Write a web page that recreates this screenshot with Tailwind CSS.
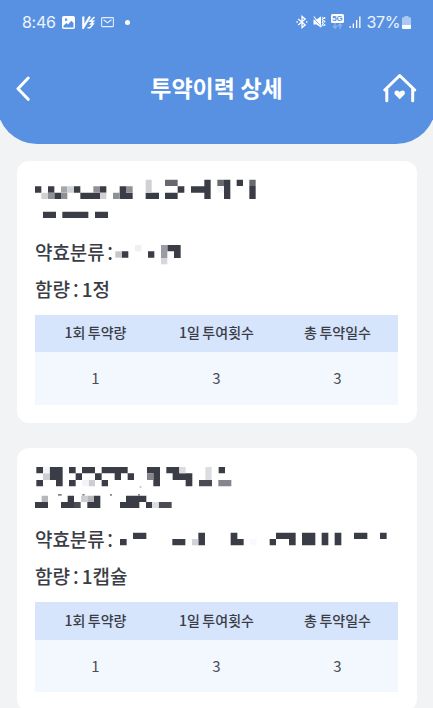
<!DOCTYPE html>
<html lang="ko">
<head>
<meta charset="utf-8">
<title>투약이력 상세</title>
<script src="https://cdn.jsdelivr.net/npm/@tailwindcss/browser@4"></script>
</head>
<body class="h-[708px] overflow-hidden bg-[#f1f3f5] font-['Noto_Sans_CJK_KR',sans-serif] text-[#3b3d46]">
<header class="-mx-[3px] h-[143.5px] rounded-b-[40px] bg-[#5891e2] px-[3px] text-white">
  <div class="flex h-[44px] items-center pl-[22px] pr-[22px] font-[Inter,sans-serif] text-[16px] leading-none text-white/90">
    <span class="w-[40px] tracking-[-0.3px]">8:46</span>
    <svg class="h-[13px] w-[13px]" viewBox="0 0 13 13"><path fill="#fff" fill-rule="evenodd" d="M1.8 0h9.4Q13 0 13 1.8v9.4q0 1.8-1.8 1.8H1.8Q0 13 0 11.200V1.800Q0 0 1.800 0zM1.500 9.800v1.700h10V7L9.300 4.800 6 8.500 4.300 7zM3 2.600v2.200h2.200V2.600z"/></svg>
    <svg class="ml-[7px] h-[13px] w-[13px]" viewBox="0 0 13 13" fill="none" stroke="#fff"><path stroke-width="2.200" d="M1.300 .5v11L8 .5"/><path stroke-width="1.500" d="M12.500 1L8 5.300h3.500L8.800 8h2.400L8 11.800H5.500"/></svg>
    <svg class="ml-[6px] h-[12px] w-[13px]" viewBox="0 0 13 12" fill="none" stroke="#e3edfb" stroke-width="1.100"><rect x=".6" y="1.600" width="11.800" height="9" rx=".8"/><path d="M2.500 3.700l4 3 4-3"/></svg>
    <i class="ml-[11px] h-[5px] w-[5px] rounded-full bg-white"></i>
    <div class="ml-auto flex items-center">
      <svg class="h-[14px] w-[12px]" viewBox="0 0 12 14" fill="none" stroke="#fff" stroke-width="1.300"><path d="M2.200 4l7 6L6 12.600V1.400L9.200 4l-7 6"/><path d="M.4 7h1.400M10 7h1.400"/></svg>
      <svg class="ml-[5px] h-[14px] w-[13px]" viewBox="0 0 13 14"><path fill="#fff" d="M.5 4.500h3.200L8 1.200v11.500L3.700 9.500H.5z"/><path fill="none" stroke="#5891e2" stroke-width="1" d="M0 2.500l9 9.500"/><path fill="none" stroke="#fff" stroke-width="1.100" d="M.8 1.500l8 10M9.400 2l1 1.200-1 1.300 1 1.300-1 1.300 1 1.300-1 1.300 1 1.300M11.700 2v2m0 1.500v2m0 1.500v2"/></svg>
      <div class="ml-[5px] flex h-[17px] w-[13px] flex-col items-center">
        <b class="h-[9px] w-[13px] rounded-[1.500px] bg-white text-center font-['Liberation_Sans',sans-serif] text-[8px] leading-[9px] text-[#5891e2]">5G</b>
        <svg class="h-[6px] w-[11px]" viewBox="0 0 11 6" fill="none" stroke="#8db5ed" stroke-width="1.300"><path d="M3 0v5M1 3l2 2 2-2M8 6V1M6 3l2-2 2 2"/></svg>
      </div>
      <svg class="ml-[5px] h-[13px] w-[12px]" viewBox="0 0 12 13" fill="#fff"><path d="M.5 10h1.200v2H.5zM3.700 7.500h1.300V12H3.700zM7 4h1.300v8H7zM10.200.5h1.300V12h-1.300z"/></svg>
      <span class="ml-[5.500px] w-[33.500px] whitespace-nowrap tracking-[-0.300px]">37%</span>
      <svg class="ml-[2px] h-[13px] w-[9px]" viewBox="0 0 9 13"><path fill="#acc8f1" d="M2.500 0h4v1.300H8q1 0 1 1v9.200q0 1.500-1.500 1.500h-6Q0 13 0 11.500V2.300q0-1 1-1h1.500z"/><path fill="#fff" d="M0 9h9v2.500Q9 13 7.500 13h-6Q0 13 0 11.500z"/></svg>
    </div>
  </div>
  <div class="flex h-[88px] items-center justify-between pl-[16px] pr-[16px]">
    <svg class="h-[26px] w-[34px]" viewBox="0 0 34 26" fill="none" stroke="#fff" stroke-width="3" stroke-linecap="round" stroke-linejoin="round"><path d="M12.200 3L2 13.800l10.200 10.500"/></svg>
    <h1 class="pb-[2px] text-[23px] leading-none font-bold whitespace-nowrap [word-spacing:-1px]">투약이력 상세</h1>
    <svg class="h-[30px] w-[34px]" viewBox="0 0 34 30" fill="none" stroke="#fff" stroke-width="3"><path stroke-linecap="round" stroke-linejoin="round" d="M1.800 17L16.700 2.500 31.700 17"/><path stroke-linecap="round" d="M3.800 16v11.800M29.700 16v11.800"/><path fill="#fff" stroke="none" d="M16.700 26.300l-4.500-4.500c-1.500-1.700-.6-4.300 1.500-4.400 1.500 0 2.500.8 3 1.800.5-1 1.500-1.800 3-1.800 2.100.1 3 2.700 1.500 4.400z"/></svg>
  </div>
</header>

<main class="flex flex-col gap-[25px] px-[16.500px] pt-[17px]">
  <section class="h-[262.500px] rounded-[12px] bg-white px-[18.500px] pt-[18px]">
    <svg class="block h-[42px] w-[363px]" viewBox="30 26 1089 126">
      <path fill="#3b3d46" d="M30 48h19v19h-19zM69 48h19v19h-19zM147 48h19v19h-19zM225 48h19v19h-19zM284 48h19v19h-19zM88 67h20v19h-20zM166 67h59v19h-59zM284 67h39v19h-39zM54 124h39v19h-39zM112 124h78v19h-78zM210 124h39v19h-39zM538 28h19v58h-19v-19h-40v-19h40zM597 28h19v58h-19zM635 28h19v19h-19zM458 48h20v19h-20zM673 47h19v39h-19zM362 67h40v19h-40zM420 67h38v19h-38z"/>
      <path fill="#68696f" d="M420 28h38v19h-38zM577 28h20v19h-20zM673 28h19v19h-19z"/>
      <path fill="#909197" d="M205 48h20v19h-20zM303 48h20v19h-20zM69 67h19v19h-19zM108 67h19v19h-19zM264 67h20v19h-20z"/>
      <path fill="#a6a6ad" d="M108 48h19v19h-19z"/>
      <path fill="#d0d1d4" d="M127 48h20v19h-20zM49 67h20v19h-20zM225 67h19v19h-19zM362 28h18v39h-18z"/>
      <path fill="#f5f6f7" d="M577 47h20v20h-20z"/>
    </svg>
    <div class="mt-[15px] flex h-[37px] items-center">
      <span class="w-[80px] pb-[6px] text-[19px] leading-none font-medium tracking-[-0.1px] whitespace-nowrap [word-spacing:-2.500px]">약효분류 <span class="relative top-[1px]">:</span></span>
      <svg class="h-[30px] w-[80px]" viewBox="270 12 240 90">
        <path fill="#3b3d46" d="M290 49h20v19h-20zM369 49h19v19h-19zM427 30h40v39h-20v-20h-20z"/>
        <path fill="#c5c6cb" d="M271 49h19v19h-19z"/><path fill="#999ca2" d="M408 30h19v39h-19z"/><path fill="#d6d7da" d="M408 69h19v19h-19z"/><path fill="#eff0f3" d="M330 30h19v19h-19z"/>
      </svg>
    </div>
    <p class="h-[37px] pt-[6px] text-[19px] leading-[19px] font-medium tracking-[-0.1px] [word-spacing:-2px]">함량 <span class="relative top-[1px]">:</span> 1정</p>
    <div class="mt-[5px] grid w-[363px] grid-cols-3 text-center text-[14px] leading-none">
      <div class="col-span-3 grid h-[37.500px] grid-cols-3 items-center bg-[#d6e4fc] pb-[2px] font-medium [word-spacing:-1.500px]"><span>1회 투약량</span><span>1일 투여횟수</span><span>총 투약일수</span></div>
      <div class="col-span-3 grid h-[52.500px] grid-cols-3 items-center bg-[#f3f8ff] pb-[1px] text-[15px] text-[#4c4e56]"><span>1</span><span>3</span><span>3</span></div>
    </div>
  </section>

  <section class="h-[262.500px] rounded-[12px] bg-white px-[18.500px] pt-[18px]">
    <svg class="block h-[42px] w-[363px]" viewBox="30 18 1089 126">
      <path fill="#3b3d46" d="M34 21h20v19h-20zM74 21h39v58h-20v-19h-19zM34 60h20v19h-20zM132 21h20v19h-20zM132 60h20v19h-20zM171 21h39v19h-39zM152 40h19v20h-19zM210 40h20v20h-20zM230 21h78v19h-78zM269 40h19v20h-19zM308 40h19v20h-19zM230 60h19v19h-19zM30 126h39v19h-39zM128 107h19v38h-39v-19h20zM207 107h19v38h-39v-19h20zM303 107h61v19h-21v19h-58v-19h18zM366 21h39v58h-20v-39h-19zM424 21h39v19h39v39h-20v-19h-39v-20h-19zM581 21h19v19h-19zM363 126h18v19h-18z"/>
      <path fill="#4b4c53" d="M147 126h20v19h-20zM522 60h39v19h-39zM401 126h39v19h-39z"/>
      <path fill="#85868b" d="M366 40h19v20h-19zM580 60h39v19h-39zM99 102h11v5h-11zM172 102h7v5h-7zM255 102h6v5h-6zM339 102h6v5h-6z"/>
      <path fill="#b5b7bb" d="M50 107h19v19h-19zM187 107h20v19h-20zM344 79h5v4h-5z"/>
      <path fill="#cdced3" d="M54 40h20v20h-20zM191 60h19v19h-19zM168 107h19v19h-19z"/>
      <path fill="#dcdde0" d="M463 21h19v19h-19zM541 21h19v39h-19zM381 126h20v19h-20z"/>
      <path fill="#f3f4f5" d="M54 21h20v19h-20zM171 60h20v19h-20z"/>
    </svg>
    <div class="mt-[15px] flex h-[37px] items-center">
      <span class="w-[80px] pb-[6px] text-[19px] leading-none font-medium tracking-[-0.1px] whitespace-nowrap [word-spacing:-2.500px]">약효분류 <span class="relative top-[1px]">:</span></span>
      <svg class="h-[30px] w-[280px]" viewBox="270 20 840 90">
        <path fill="#3b3d46" d="M285 56h20v19h-20zM324 37h40v19h-40zM442 56h39v19h-39zM520 37h20v38h-20zM617 37h20v19h19v19h-39zM734 56h19v19h-19zM753 37h59v38h-20v-19h-39zM831 37h40v38h-40zM890 37h20v38h-20zM929 37h20v38h-20zM987 37h40v19h-40zM1065 37h20v19h-20z"/>
        <path fill="#d2d3da" d="M501 56h19v19h-19z"/><path fill="#f8fafb" d="M674 56h21v19h-21z"/>
      </svg>
    </div>
    <p class="h-[37px] pt-[6px] text-[19px] leading-[19px] font-medium tracking-[-0.1px] [word-spacing:-2px]">함량 <span class="relative top-[1px]">:</span> 1캡슐</p>
    <div class="mt-[5px] grid w-[363px] grid-cols-3 text-center text-[14px] leading-none">
      <div class="col-span-3 grid h-[37.500px] grid-cols-3 items-center bg-[#d6e4fc] pb-[2px] font-medium [word-spacing:-1.500px]"><span>1회 투약량</span><span>1일 투여횟수</span><span>총 투약일수</span></div>
      <div class="col-span-3 grid h-[52.500px] grid-cols-3 items-center bg-[#f3f8ff] pb-[1px] text-[15px] text-[#4c4e56]"><span>1</span><span>3</span><span>3</span></div>
    </div>
  </section>
</main>
</body>
</html>
